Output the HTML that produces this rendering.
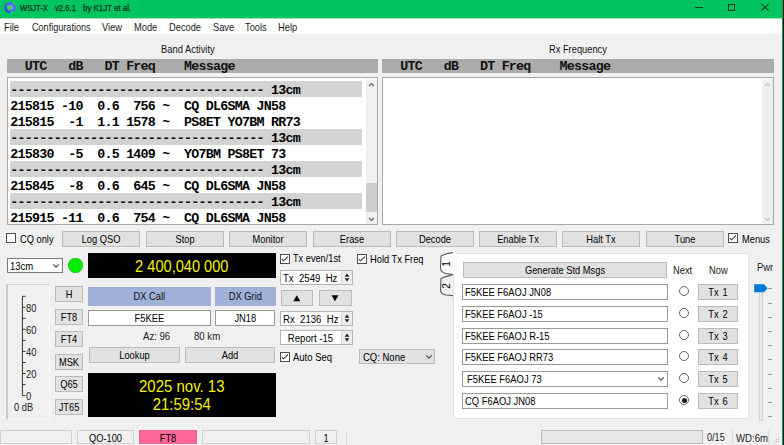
<!DOCTYPE html>
<html><head><meta charset="utf-8"><style>
html,body{margin:0;padding:0;}
body{width:784px;height:445px;overflow:hidden;position:relative;background:#f0f0f0;font-family:"Liberation Sans",sans-serif;}
.a{position:absolute;}
.t{position:absolute;white-space:pre;line-height:16px;height:16px;}
.c{text-align:center;}
.btn{position:absolute;box-sizing:border-box;background:#e1e1e1;border:1px solid #bcbcbc;text-align:center;white-space:pre;color:#000;}
.cb{position:absolute;box-sizing:border-box;background:#fff;border:1px solid #505050;}
.inp{position:absolute;box-sizing:border-box;background:#fff;border:1px solid #9a9a9a;}
.mono{font-family:"Liberation Mono",monospace;font-weight:bold;}
</style></head><body>

<div class="a" style="left:0px;top:0px;width:784px;height:18px;background:#00c462"></div>
<div class="a" style="left:0px;top:18px;width:784px;height:1px;background:#9ee6c0"></div>
<svg class="a" style="left:3px;top:1px" width="15" height="15" viewBox="0 0 15 15"><defs><radialGradient id="ig" cx="0.6" cy="0.45" r="0.6"><stop offset="0" stop-color="#a0b0ff"/><stop offset="0.5" stop-color="#5a6cf0"/><stop offset="1" stop-color="#2f3fe0"/></radialGradient></defs><circle cx="6.9" cy="6.7" r="5.5" fill="url(#ig)"/><path d="M4.2 4 Q7.6 3.8 8 7 Q7.4 9.4 5 9.2 Q3.8 7 4.2 4 Z" fill="#20e830"/><path d="M7.6 10.2 Q10 9.8 10.6 11.6 Q9.2 12.6 7.8 12.2 Z" fill="#20e030"/><path d="M10 1.6 Q11.4 2 12 3.4" fill="none" stroke="#40f040" stroke-width="0.9"/></svg>
<div class="t" style="left:19.8px;top:-0.20000000000000018px;font-size:9.27px;color:#0b2f1a;transform:scaleX(0.8197);transform-origin:0 50%;-webkit-text-stroke:0.25px #0b2f1a">WSJT-X</div>
<div class="t" style="left:54.6px;top:-0.20000000000000018px;font-size:9.39px;color:#0b2f1a;transform:scaleX(0.8197);transform-origin:0 50%;-webkit-text-stroke:0.25px #0b2f1a">v2.6.1</div>
<div class="t" style="left:82.8px;top:-0.20000000000000018px;font-size:9.64px;color:#0b2f1a;transform:scaleX(0.8197);transform-origin:0 50%;-webkit-text-stroke:0.25px #0b2f1a">by K1JT et al.</div>
<div class="a" style="left:695px;top:7px;width:8px;height:1px;background:#10301c"></div>
<div class="a" style="left:728px;top:4px;width:7px;height:7px;box-sizing:border-box;border:1px solid #10301c"></div>
<svg class="a" style="left:760px;top:3px" width="10" height="10" viewBox="0 0 10 10"><path d="M1.3 0.8 L8.7 7.6 M8.7 0.8 L1.3 7.6" stroke="#0c3a1e" stroke-width="1.1"/></svg>
<div class="a" style="left:0px;top:19px;width:784px;height:14px;background:#fff"></div>
<div class="a" style="left:0px;top:33px;width:784px;height:1px;background:#f8f8f8"></div>
<div class="t" style="left:4.2px;top:19.0px;font-size:10.51px;color:#1a1a1a;transform:scaleX(0.8850);transform-origin:0 50%;">File</div>
<div class="t" style="left:31.6px;top:19.0px;font-size:10.51px;color:#1a1a1a;transform:scaleX(0.8659);transform-origin:0 50%;">Configurations</div>
<div class="t" style="left:102.4px;top:19.0px;font-size:10.51px;color:#1a1a1a;transform:scaleX(0.8850);transform-origin:0 50%;">View</div>
<div class="t" style="left:133.9px;top:19.0px;font-size:10.51px;color:#1a1a1a;transform:scaleX(0.8850);transform-origin:0 50%;">Mode</div>
<div class="t" style="left:169.3px;top:19.0px;font-size:10.51px;color:#1a1a1a;transform:scaleX(0.8850);transform-origin:0 50%;">Decode</div>
<div class="t" style="left:212.7px;top:19.0px;font-size:10.51px;color:#1a1a1a;transform:scaleX(0.8850);transform-origin:0 50%;">Save</div>
<div class="t" style="left:244.8px;top:19.0px;font-size:10.51px;color:#1a1a1a;transform:scaleX(0.8850);transform-origin:0 50%;">Tools</div>
<div class="t" style="left:278px;top:19.0px;font-size:10.51px;color:#1a1a1a;transform:scaleX(0.8850);transform-origin:0 50%;">Help</div>
<div class="a" style="left:782px;top:0px;width:1px;height:445px;background:#00a050"></div>
<div class="a" style="left:783px;top:0px;width:1px;height:445px;background:#111"></div>
<div class="t" style="left:160.9px;top:40.5px;font-size:10.62px;color:#111;transform:scaleX(0.8850);transform-origin:0 50%;">Band Activity</div>
<div class="t" style="left:548.5px;top:40.5px;font-size:10.51px;color:#111;transform:scaleX(0.8850);transform-origin:0 50%;">Rx Frequency</div>
<div class="a" style="left:7px;top:59px;width:371px;height:14px;background:#ababab"></div>
<div class="a" style="left:382px;top:59px;width:392px;height:14px;background:#ababab"></div>
<div class="t mono" style="left:10.3px;top:59.4px;font-size:13.3px;letter-spacing:-0.74px;color:#111">  UTC   dB   DT Freq    Message</div>
<div class="t mono" style="left:385.8px;top:59.4px;font-size:13.3px;letter-spacing:-0.74px;color:#111">  UTC   dB   DT Freq    Message</div>
<div class="a" style="left:7px;top:77px;width:371px;height:148px;box-sizing:border-box;background:#fff;border:1px solid #a8a8a8;"></div>
<div class="a" style="left:382px;top:77px;width:392px;height:148px;box-sizing:border-box;background:#fff;border:1px solid #a8a8a8;"></div>
<div class="a" style="left:366px;top:79px;width:11px;height:145px;background:#f0f0f0"></div>
<div class="a" style="left:762px;top:79px;width:11px;height:145px;background:#f0f0f0"></div>
<div class="a" style="left:366px;top:183px;width:11px;height:29px;background:#cdcdcd"></div>
<svg class="a" style="left:366px;top:80px" width="11" height="10" viewBox="0 0 11 10"><path d="M3 6 L5.5 3.5 L8 6" fill="none" stroke="#606060" stroke-width="1.2"/></svg>
<svg class="a" style="left:366px;top:214px" width="11" height="10" viewBox="0 0 11 10"><path d="M3 4 L5.5 6.5 L8 4" fill="none" stroke="#606060" stroke-width="1.2"/></svg>
<svg class="a" style="left:762px;top:80px" width="11" height="10" viewBox="0 0 11 10"><path d="M3 6 L5.5 3.5 L8 6" fill="none" stroke="#c0c0c0" stroke-width="1.2"/></svg>
<svg class="a" style="left:762px;top:214px" width="11" height="10" viewBox="0 0 11 10"><path d="M3 4 L5.5 6.5 L8 4" fill="none" stroke="#c0c0c0" stroke-width="1.2"/></svg>
<div class="a" style="left:8px;top:79px;width:358px;height:145px;overflow:hidden">
<div class="a" style="left:2px;top:2px;width:352px;height:16px;background:#d3d3d3"></div>
<div class="t mono" style="left:2.3000000000000007px;top:3.6px;font-size:13.3px;letter-spacing:-0.74px;color:#000">----------------------------------- 13cm</div>
<div class="t mono" style="left:2.3000000000000007px;top:19.6px;font-size:13.3px;letter-spacing:-0.74px;color:#000">215815 -10  0.6  756 ~  CQ DL6SMA JN58</div>
<div class="t mono" style="left:2.3000000000000007px;top:35.6px;font-size:13.3px;letter-spacing:-0.74px;color:#000">215815  -1  1.1 1578 ~  PS8ET YO7BM RR73</div>
<div class="a" style="left:2px;top:50px;width:352px;height:16px;background:#d3d3d3"></div>
<div class="t mono" style="left:2.3000000000000007px;top:51.6px;font-size:13.3px;letter-spacing:-0.74px;color:#000">----------------------------------- 13cm</div>
<div class="t mono" style="left:2.3000000000000007px;top:67.6px;font-size:13.3px;letter-spacing:-0.74px;color:#000">215830  -5  0.5 1409 ~  YO7BM PS8ET 73</div>
<div class="a" style="left:2px;top:82px;width:352px;height:16px;background:#d3d3d3"></div>
<div class="t mono" style="left:2.3000000000000007px;top:83.6px;font-size:13.3px;letter-spacing:-0.74px;color:#000">----------------------------------- 13cm</div>
<div class="t mono" style="left:2.3000000000000007px;top:99.6px;font-size:13.3px;letter-spacing:-0.74px;color:#000">215845  -8  0.6  645 ~  CQ DL6SMA JN58</div>
<div class="a" style="left:2px;top:114px;width:352px;height:16px;background:#d3d3d3"></div>
<div class="t mono" style="left:2.3000000000000007px;top:115.6px;font-size:13.3px;letter-spacing:-0.74px;color:#000">----------------------------------- 13cm</div>
<div class="t mono" style="left:2.3000000000000007px;top:131.6px;font-size:13.3px;letter-spacing:-0.74px;color:#000">215915 -11  0.6  754 ~  CQ DL6SMA JN58</div>
</div>
<div class="cb" style="left:6px;top:233px;width:10px;height:10px"></div>
<div class="t" style="left:19.9px;top:231.0px;font-size:10.51px;color:#000;transform:scaleX(0.8850);transform-origin:0 50%;">CQ only</div>
<div class="btn" style="left:62px;top:231px;width:78px;height:16px;"></div>
<div class="t c" style="left:62px;width:78px;top:231.0px;font-size:10.51px;color:#000;transform:scaleX(0.8850);transform-origin:50% 50%;">Log QSO</div>
<div class="btn" style="left:146px;top:231px;width:78px;height:16px;"></div>
<div class="t c" style="left:146px;width:78px;top:231.0px;font-size:10.51px;color:#000;transform:scaleX(0.8850);transform-origin:50% 50%;">Stop</div>
<div class="btn" style="left:229px;top:231px;width:78px;height:16px;"></div>
<div class="t c" style="left:229px;width:78px;top:231.0px;font-size:10.51px;color:#000;transform:scaleX(0.8850);transform-origin:50% 50%;">Monitor</div>
<div class="btn" style="left:313px;top:231px;width:78px;height:16px;"></div>
<div class="t c" style="left:313px;width:78px;top:231.0px;font-size:10.51px;color:#000;transform:scaleX(0.8850);transform-origin:50% 50%;">Erase</div>
<div class="btn" style="left:396px;top:231px;width:78px;height:16px;"></div>
<div class="t c" style="left:396px;width:78px;top:231.0px;font-size:10.51px;color:#000;transform:scaleX(0.8850);transform-origin:50% 50%;">Decode</div>
<div class="btn" style="left:479px;top:231px;width:78px;height:16px;"></div>
<div class="t c" style="left:479px;width:78px;top:231.0px;font-size:10.51px;color:#000;transform:scaleX(0.8850);transform-origin:50% 50%;">Enable Tx</div>
<div class="btn" style="left:562px;top:231px;width:78px;height:16px;"></div>
<div class="t c" style="left:562px;width:78px;top:231.0px;font-size:10.51px;color:#000;transform:scaleX(0.8850);transform-origin:50% 50%;">Halt Tx</div>
<div class="btn" style="left:646px;top:231px;width:78px;height:16px;"></div>
<div class="t c" style="left:646px;width:78px;top:231.0px;font-size:10.51px;color:#000;transform:scaleX(0.8850);transform-origin:50% 50%;">Tune</div>
<div class="cb" style="left:728px;top:233px;width:10px;height:10px"></div>
<svg class="a" style="left:728px;top:233px" width="10" height="10" viewBox="0 0 10 10"><path d="M1.9 5.1 L3.5 6.8 L7.9 2.6" fill="none" stroke="#3a3a3a" stroke-width="1.15"/></svg>
<div class="t" style="left:742px;top:231.0px;font-size:10.51px;color:#000;transform:scaleX(0.8850);transform-origin:0 50%;">Menus</div>
<div class="inp" style="left:6.5px;top:257.8px;width:56.7px;height:15.7px;border-color:#7a7a7a"></div>
<div class="t" style="left:10px;top:257.6px;font-size:10.73px;color:#000;transform:scaleX(0.8850);transform-origin:0 50%;">13cm</div>
<svg class="a" style="left:52.3px;top:263.2px" width="8" height="6" viewBox="0 0 8 6"><path d="M1.2 1.3 L4 4.1 L6.8 1.3" fill="none" stroke="#505050" stroke-width="1.2"/></svg>
<div class="a" style="left:67.7px;top:257.6px;width:15.6px;height:15.6px;border-radius:50%;background:#00f000;box-shadow:inset 0 0 0 0.8px #30c030"></div>
<div class="a" style="left:88px;top:253.4px;width:187.60000000000002px;height:24.99999999999997px;background:#000"></div>
<div class="t c" style="left:88px;width:187.60000000000002px;top:259.0px;font-size:15.77px;color:#f2f200;transform:scaleX(0.9259);transform-origin:50% 50%;">2 400,040 000</div>
<div class="a" style="left:6px;top:284px;width:43.5px;height:136px;box-sizing:border-box;border:1px solid #d4d4d4;border-left:2px solid #cdcdcd;border-right-color:#fafafa;border-bottom-color:#fafafa"></div>
<svg class="a" style="left:0px;top:290px" width="50" height="110" viewBox="0 290 50 110"><path d="M22.4 296.3 L22.4 395.6 M22.4 296.3 L25.5 296.3 M22.4 307.2 L25.5 307.2 M22.4 318.3 L25.5 318.3 M22.4 329.3 L25.5 329.3 M22.4 340.4 L25.5 340.4 M22.4 351.4 L25.5 351.4 M22.4 362.5 L25.5 362.5 M22.4 373.5 L25.5 373.5 M22.4 384.6 L25.5 384.6 M22.4 395.6 L25.5 395.6" stroke="#333" stroke-width="1"/></svg>
<div class="t" style="left:26.3px;top:299.6px;font-size:10.62px;color:#222;transform:scaleX(0.8850);transform-origin:0 50%;">80</div>
<div class="t" style="left:26.3px;top:321.7px;font-size:10.62px;color:#222;transform:scaleX(0.8850);transform-origin:0 50%;">60</div>
<div class="t" style="left:26.3px;top:343.8px;font-size:10.62px;color:#222;transform:scaleX(0.8850);transform-origin:0 50%;">40</div>
<div class="t" style="left:26.3px;top:365.6px;font-size:10.62px;color:#222;transform:scaleX(0.8850);transform-origin:0 50%;">20</div>
<div class="t" style="left:26.3px;top:387.5px;font-size:10.62px;color:#222;transform:scaleX(0.8850);transform-origin:0 50%;">0</div>
<div class="t" style="left:14px;top:398.8px;font-size:10.51px;color:#222;transform:scaleX(0.8850);transform-origin:0 50%;">0 dB</div>
<div class="btn" style="left:55px;top:286px;width:28px;height:16px;"></div>
<div class="t c" style="left:55px;width:28px;top:286.0px;font-size:10.51px;color:#000;transform:scaleX(0.8850);transform-origin:50% 50%;">H</div>
<div class="btn" style="left:55px;top:309px;width:28px;height:16px;"></div>
<div class="t c" style="left:55px;width:28px;top:309.0px;font-size:10.51px;color:#000;transform:scaleX(0.8850);transform-origin:50% 50%;">FT8</div>
<div class="btn" style="left:55px;top:331px;width:28px;height:16px;"></div>
<div class="t c" style="left:55px;width:28px;top:331.0px;font-size:10.51px;color:#000;transform:scaleX(0.8850);transform-origin:50% 50%;">FT4</div>
<div class="btn" style="left:55px;top:354px;width:28px;height:16px;"></div>
<div class="t c" style="left:55px;width:28px;top:354.0px;font-size:10.51px;color:#000;transform:scaleX(0.8850);transform-origin:50% 50%;">MSK</div>
<div class="btn" style="left:55px;top:376px;width:28px;height:16px;"></div>
<div class="t c" style="left:55px;width:28px;top:376.0px;font-size:10.51px;color:#000;transform:scaleX(0.8850);transform-origin:50% 50%;">Q65</div>
<div class="btn" style="left:55px;top:399px;width:28px;height:16px;"></div>
<div class="t c" style="left:55px;width:28px;top:399.0px;font-size:10.51px;color:#000;transform:scaleX(0.8850);transform-origin:50% 50%;">JT65</div>
<div class="a" style="left:88px;top:287px;width:123px;height:19px;background:#a0b0d8"></div>
<div class="t c" style="left:88px;width:122.6px;top:288.1px;font-size:10.51px;color:#111;transform:scaleX(0.8850);transform-origin:50% 50%;">DX Call</div>
<div class="a" style="left:215px;top:287px;width:61px;height:19px;background:#a0b0d8"></div>
<div class="t c" style="left:214.9px;width:60.70000000000002px;top:288.1px;font-size:10.51px;color:#111;transform:scaleX(0.8850);transform-origin:50% 50%;">DX Grid</div>
<div class="inp" style="left:88px;top:310px;width:122.7px;height:15.6px"></div>
<div class="t c" style="left:88px;width:122.69999999999999px;top:309.8px;font-size:10.62px;color:#000;transform:scaleX(0.8850);transform-origin:50% 50%;">F5KEE</div>
<div class="inp" style="left:214.8px;top:310px;width:60.7px;height:15.6px"></div>
<div class="t c" style="left:214.8px;width:60.69999999999999px;top:309.8px;font-size:10.62px;color:#000;transform:scaleX(0.8850);transform-origin:50% 50%;">JN18</div>
<div class="t" style="left:142.8px;top:328.4px;font-size:10.85px;color:#222;transform:scaleX(0.8850);transform-origin:0 50%;">Az: 96</div>
<div class="t" style="left:193.7px;top:328.4px;font-size:10.85px;color:#222;transform:scaleX(0.8850);transform-origin:0 50%;">80 km</div>
<div class="btn" style="left:88.5px;top:347px;width:91.0px;height:16px;"></div>
<div class="t c" style="left:88.5px;width:91.0px;top:347.0px;font-size:10.51px;color:#000;transform:scaleX(0.8850);transform-origin:50% 50%;">Lookup</div>
<div class="btn" style="left:185px;top:347px;width:90px;height:16px;"></div>
<div class="t c" style="left:185px;width:90px;top:347.0px;font-size:10.51px;color:#000;transform:scaleX(0.8850);transform-origin:50% 50%;">Add</div>
<div class="a" style="left:88px;top:372.8px;width:187.5px;height:43.89999999999998px;background:#000"></div>
<div class="t c" style="left:88px;width:187.5px;top:379.2px;font-size:16.95px;color:#f2f200;transform:scaleX(0.8850);transform-origin:50% 50%;">2025 nov. 13</div>
<div class="t c" style="left:88px;width:187.5px;top:397.4px;font-size:16.84px;color:#f2f200;transform:scaleX(0.8850);transform-origin:50% 50%;">21:59:54</div>
<div class="cb" style="left:280px;top:254px;width:10px;height:10px"></div>
<svg class="a" style="left:280px;top:254px" width="10" height="10" viewBox="0 0 10 10"><path d="M1.9 5.1 L3.5 6.8 L7.9 2.6" fill="none" stroke="#3a3a3a" stroke-width="1.15"/></svg>
<div class="t" style="left:293.4px;top:250.8px;font-size:10.40px;color:#000;transform:scaleX(0.8850);transform-origin:0 50%;">Tx even/1st</div>
<div class="cb" style="left:357px;top:254px;width:10px;height:10px"></div>
<svg class="a" style="left:357px;top:254px" width="10" height="10" viewBox="0 0 10 10"><path d="M1.9 5.1 L3.5 6.8 L7.9 2.6" fill="none" stroke="#3a3a3a" stroke-width="1.15"/></svg>
<div class="t" style="left:370.4px;top:250.8px;font-size:10.51px;color:#000;transform:scaleX(0.8850);transform-origin:0 50%;">Hold Tx Freq</div>
<div class="inp" style="left:280px;top:270px;width:73px;height:15px;border-color:#b4b4b4"></div>
<div class="a" style="left:341px;top:271px;width:11px;height:13px;background:#ececec;border-left:1px solid #d8d8d8;box-sizing:border-box"></div>
<svg class="a" style="left:342px;top:271px" width="10" height="13" viewBox="0 0 10 13"><path d="M2.6 5.7 L5 2.5 L7.4 5.7 Z M2.6 7.3 L5 10.5 L7.4 7.3 Z" fill="#222"/></svg>
<div class="t" style="left:283px;top:269.5px;font-size:10.85px;color:#000;transform:scaleX(0.8850);transform-origin:0 50%;">Tx  2549  Hz</div>
<div class="btn" style="left:281.4px;top:290.2px;width:32px;height:15.7px"></div>
<svg class="a" style="left:281.4px;top:290.2px" width="32" height="16" viewBox="0 0 32 16"><path d="M12.3 11.3 L15.8 5.2 L19.3 11.3 Z" fill="#000"/></svg>
<div class="btn" style="left:319.3px;top:290.2px;width:32.6px;height:15.7px"></div>
<svg class="a" style="left:319.3px;top:290.2px" width="32" height="16" viewBox="0 0 32 16"><path d="M12.5 5.2 L16 11.3 L19.5 5.2 Z" fill="#000"/></svg>
<div class="inp" style="left:280px;top:311px;width:73px;height:15px;border-color:#b4b4b4"></div>
<div class="a" style="left:341px;top:312px;width:11px;height:13px;background:#ececec;border-left:1px solid #d8d8d8;box-sizing:border-box"></div>
<svg class="a" style="left:342px;top:312px" width="10" height="13" viewBox="0 0 10 13"><path d="M2.6 5.7 L5 2.5 L7.4 5.7 Z M2.6 7.3 L5 10.5 L7.4 7.3 Z" fill="#222"/></svg>
<div class="t" style="left:283px;top:310.5px;font-size:10.85px;color:#000;transform:scaleX(0.8850);transform-origin:0 50%;">Rx  2136  Hz</div>
<div class="inp" style="left:280px;top:330px;width:73px;height:15px;border-color:#b4b4b4"></div>
<div class="a" style="left:341px;top:331px;width:11px;height:13px;background:#ececec;border-left:1px solid #d8d8d8;box-sizing:border-box"></div>
<svg class="a" style="left:342px;top:331px" width="10" height="13" viewBox="0 0 10 13"><path d="M2.6 5.7 L5 2.5 L7.4 5.7 Z M2.6 7.3 L5 10.5 L7.4 7.3 Z" fill="#222"/></svg>
<div class="t c" style="left:280px;width:61px;top:329.5px;font-size:10.85px;color:#000;transform:scaleX(0.8850);transform-origin:50% 50%;">Report -15</div>
<div class="cb" style="left:280px;top:352px;width:10px;height:10px"></div>
<svg class="a" style="left:280px;top:352px" width="10" height="10" viewBox="0 0 10 10"><path d="M1.9 5.1 L3.5 6.8 L7.9 2.6" fill="none" stroke="#3a3a3a" stroke-width="1.15"/></svg>
<div class="t" style="left:293.4px;top:349.4px;font-size:10.73px;color:#000;transform:scaleX(0.8850);transform-origin:0 50%;">Auto Seq</div>
<div class="btn" style="left:359.3px;top:348.7px;width:76.1px;height:15.7px;text-align:left"></div>
<div class="t" style="left:362.5px;top:348.6px;font-size:10.73px;color:#000;transform:scaleX(0.8850);transform-origin:0 50%;">CQ: None</div>
<svg class="a" style="left:425px;top:354.2px" width="8" height="6" viewBox="0 0 8 6"><path d="M1.2 1.3 L4 4.1 L6.8 1.3" fill="none" stroke="#505050" stroke-width="1.2"/></svg>
<div class="a" style="left:453px;top:252.5px;width:296px;height:166.8px;background:#fff;border:1px solid #e3e3e3;box-sizing:border-box"></div>
<svg class="a" style="left:436px;top:248px" width="20" height="52" viewBox="436 248 20 52"><path d="M453 252.6 Q446 253.5 441 256 L440.5 268 Q440.5 272 446 273.5 L453 274.6" fill="#fff" stroke="#5a5a5a" stroke-width="1.1"/><path d="M453 274.6 Q446 276 441 278.5 L440.5 290 Q440.5 294 446 295 L453 295.6" fill="#f0f0f0" stroke="#5a5a5a" stroke-width="1.1"/><rect x="452.9" y="252.6" width="3" height="22" fill="#fff"/></svg>
<div class="t" style="left:437px;top:255.5px;width:20px;height:16px;line-height:16px;font-size:10px;text-align:center;transform:rotate(-90deg)">1</div>
<div class="t" style="left:437px;top:278px;width:20px;height:16px;line-height:16px;font-size:10px;text-align:center;transform:rotate(-90deg)">2</div>
<div class="btn" style="left:463px;top:262px;width:204px;height:16px;"></div>
<div class="t c" style="left:463px;width:204px;top:262.0px;font-size:10.51px;color:#000;transform:scaleX(0.8850);transform-origin:50% 50%;">Generate Std Msgs</div>
<div class="t" style="left:672.8px;top:262.2px;font-size:10.51px;color:#222;transform:scaleX(0.8850);transform-origin:0 50%;">Next</div>
<div class="t" style="left:709px;top:262.2px;font-size:10.51px;color:#222;transform:scaleX(0.8850);transform-origin:0 50%;">Now</div>
<div class="inp" style="left:462px;top:284px;width:206px;height:16px"></div>
<div class="t" style="left:464.5px;top:284.0px;font-size:10.62px;color:#000;transform:scaleX(0.8850);transform-origin:0 50%;">F5KEE F6AOJ JN08</div>
<div class="a" style="left:679px;top:286.1px;width:10px;height:10px;border-radius:50%;border:1.2px solid #666;box-sizing:border-box;background:#fff"></div>
<div class="btn" style="left:698px;top:284px;width:40px;height:16px;"></div>
<div class="t c" style="left:698px;width:40px;top:284.0px;font-size:10.51px;color:#000;transform:scaleX(0.8850);transform-origin:50% 50%;word-spacing:1.5px">Tx 1</div>
<div class="inp" style="left:462px;top:306px;width:206px;height:16px"></div>
<div class="t" style="left:464.5px;top:306.0px;font-size:10.62px;color:#000;transform:scaleX(0.8850);transform-origin:0 50%;">F5KEE F6AOJ -15</div>
<div class="a" style="left:679px;top:308.1px;width:10px;height:10px;border-radius:50%;border:1.2px solid #666;box-sizing:border-box;background:#fff"></div>
<div class="btn" style="left:698px;top:306px;width:40px;height:16px;"></div>
<div class="t c" style="left:698px;width:40px;top:306.0px;font-size:10.51px;color:#000;transform:scaleX(0.8850);transform-origin:50% 50%;word-spacing:1.5px">Tx 2</div>
<div class="inp" style="left:462px;top:328px;width:206px;height:16px"></div>
<div class="t" style="left:464.5px;top:328.0px;font-size:10.62px;color:#000;transform:scaleX(0.8850);transform-origin:0 50%;">F5KEE F6AOJ R-15</div>
<div class="a" style="left:679px;top:330.1px;width:10px;height:10px;border-radius:50%;border:1.2px solid #666;box-sizing:border-box;background:#fff"></div>
<div class="btn" style="left:698px;top:328px;width:40px;height:16px;"></div>
<div class="t c" style="left:698px;width:40px;top:328.0px;font-size:10.51px;color:#000;transform:scaleX(0.8850);transform-origin:50% 50%;word-spacing:1.5px">Tx 3</div>
<div class="inp" style="left:462px;top:349px;width:206px;height:16px"></div>
<div class="t" style="left:464.5px;top:349.0px;font-size:10.62px;color:#000;transform:scaleX(0.8850);transform-origin:0 50%;">F5KEE F6AOJ RR73</div>
<div class="a" style="left:679px;top:351.1px;width:10px;height:10px;border-radius:50%;border:1.2px solid #666;box-sizing:border-box;background:#fff"></div>
<div class="btn" style="left:698px;top:349px;width:40px;height:16px;"></div>
<div class="t c" style="left:698px;width:40px;top:349.0px;font-size:10.51px;color:#000;transform:scaleX(0.8850);transform-origin:50% 50%;word-spacing:1.5px">Tx 4</div>
<div class="inp" style="left:462px;top:371px;width:206px;height:16px"></div>
<div class="t" style="left:466.5px;top:371.0px;font-size:10.62px;color:#000;transform:scaleX(0.8850);transform-origin:0 50%;">F5KEE F6AOJ 73</div>
<svg class="a" style="left:657.4px;top:376.2px" width="8" height="6" viewBox="0 0 8 6"><path d="M1.2 1.3 L4 4.1 L6.8 1.3" fill="none" stroke="#505050" stroke-width="1.2"/></svg>
<div class="a" style="left:679px;top:373.1px;width:10px;height:10px;border-radius:50%;border:1.2px solid #666;box-sizing:border-box;background:#fff"></div>
<div class="btn" style="left:698px;top:371px;width:40px;height:16px;"></div>
<div class="t c" style="left:698px;width:40px;top:371.0px;font-size:10.51px;color:#000;transform:scaleX(0.8850);transform-origin:50% 50%;word-spacing:1.5px">Tx 5</div>
<div class="inp" style="left:462px;top:393px;width:206px;height:16px"></div>
<div class="t" style="left:464.5px;top:393.0px;font-size:10.62px;color:#000;transform:scaleX(0.8850);transform-origin:0 50%;">CQ F6AOJ JN08</div>
<div class="a" style="left:679px;top:395.1px;width:10px;height:10px;border-radius:50%;border:1.2px solid #666;box-sizing:border-box;background:#fff"></div>
<div class="a" style="left:681.5px;top:397.6px;width:5px;height:5px;border-radius:50%;background:#1a1a1a"></div>
<div class="btn" style="left:698px;top:393px;width:40px;height:16px;"></div>
<div class="t c" style="left:698px;width:40px;top:393.0px;font-size:10.51px;color:#000;transform:scaleX(0.8850);transform-origin:50% 50%;word-spacing:1.5px">Tx 6</div>
<div class="t" style="left:756.9px;top:259.0px;font-size:10.62px;color:#222;transform:scaleX(0.8850);transform-origin:0 50%;">Pwr</div>
<div class="a" style="left:759px;top:290px;width:4px;height:130.5px;background:#e7e7e7;border:1px solid #d6d6d6;box-sizing:border-box"></div>
<svg class="a" style="left:753px;top:283px" width="16" height="11" viewBox="0 0 16 11"><path d="M1.2 1.2 L11 1.2 L14.6 5.2 L11 9.2 L1.2 9.2 Z" fill="#0078d7"/></svg>
<div class="a" style="left:768px;top:288px;width:4px;height:1px;background:#9a9a9a"></div>
<div class="a" style="left:768px;top:303px;width:4px;height:1px;background:#9a9a9a"></div>
<div class="a" style="left:768px;top:317px;width:4px;height:1px;background:#9a9a9a"></div>
<div class="a" style="left:768px;top:331px;width:4px;height:1px;background:#9a9a9a"></div>
<div class="a" style="left:768px;top:345px;width:4px;height:1px;background:#9a9a9a"></div>
<div class="a" style="left:768px;top:359px;width:4px;height:1px;background:#9a9a9a"></div>
<div class="a" style="left:768px;top:374px;width:4px;height:1px;background:#9a9a9a"></div>
<div class="a" style="left:768px;top:388px;width:4px;height:1px;background:#9a9a9a"></div>
<div class="a" style="left:768px;top:402px;width:4px;height:1px;background:#9a9a9a"></div>
<div class="a" style="left:768px;top:416px;width:4px;height:1px;background:#9a9a9a"></div>
<div class="a" style="left:0px;top:430px;width:72px;height:14px;box-sizing:border-box;border:1px solid #cfcfcf;background:#f0f0f0"></div>
<div class="a" style="left:77px;top:430px;width:57px;height:14px;box-sizing:border-box;border:1px solid #cfcfcf;background:#f0f0f0"></div>
<div class="t c" style="left:77px;width:57px;top:429.6px;font-size:10.51px;color:#000;transform:scaleX(0.8850);transform-origin:50% 50%;">QO-100</div>
<div class="a" style="left:139px;top:430px;width:58px;height:14px;box-sizing:border-box;border:1px solid #e8658f;background:#ff6699"></div>
<div class="t c" style="left:139px;width:58px;top:429.6px;font-size:10.51px;color:#000;transform:scaleX(0.8850);transform-origin:50% 50%;">FT8</div>
<div class="a" style="left:202px;top:430px;width:108px;height:14px;box-sizing:border-box;border:1px solid #cfcfcf;background:#f0f0f0"></div>
<div class="a" style="left:315px;top:430px;width:22px;height:14px;box-sizing:border-box;border:1px solid #cfcfcf;background:#f0f0f0"></div>
<div class="t c" style="left:315px;width:22px;top:429.6px;font-size:10.51px;color:#000;transform:scaleX(0.8850);transform-origin:50% 50%;">1</div>
<div class="a" style="left:346px;top:431px;width:1px;height:14px;background:#dadada"></div>
<div class="a" style="left:541px;top:430px;width:162px;height:14px;box-sizing:border-box;border:1px solid #bcbcbc;background:#e6e6e6"></div>
<div class="t" style="left:706.9px;top:429.6px;font-size:10.28px;color:#222;transform:scaleX(0.8850);transform-origin:0 50%;">0/15</div>
<div class="a" style="left:731.5px;top:430px;width:1.0px;height:14px;background:#dadada"></div>
<div class="t" style="left:735.5px;top:429.5px;font-size:10.85px;color:#222;transform:scaleX(0.8850);transform-origin:0 50%;">WD:6m</div>
<div class="a" style="left:768px;top:430px;width:1px;height:14px;background:#dadada"></div>
<div class="a" style="left:778px;top:437px;width:1px;height:1px;background:#b0b0b0"></div>
<div class="a" style="left:776px;top:439px;width:1px;height:1px;background:#b0b0b0"></div>
<div class="a" style="left:778px;top:439px;width:1px;height:1px;background:#b0b0b0"></div>
<div class="a" style="left:774px;top:441px;width:1px;height:1px;background:#b0b0b0"></div>
<div class="a" style="left:776px;top:441px;width:1px;height:1px;background:#b0b0b0"></div>
<div class="a" style="left:778px;top:441px;width:1px;height:1px;background:#b0b0b0"></div>
</body></html>
